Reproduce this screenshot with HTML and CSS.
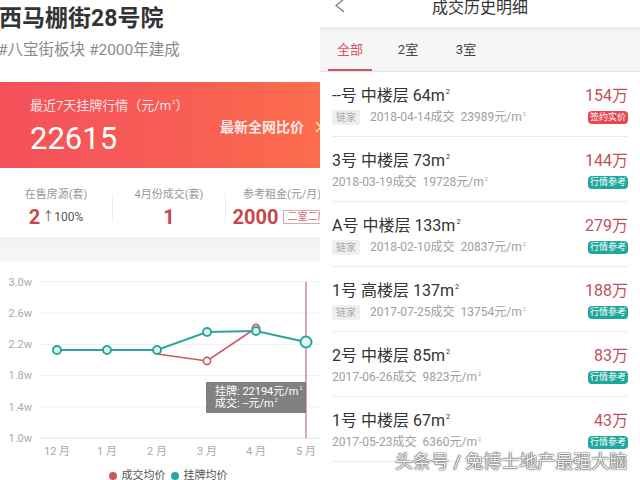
FILE: index.html
```html
<!DOCTYPE html>
<html lang="zh-CN">
<head>
<meta charset="utf-8">
<title>成交历史明细</title>
<link rel="stylesheet" href="styles.css">
</head>
<body>
<div class="page">
  <section class="left">
    <h1 class="title">西马棚街28号院</h1>
    <p class="tags">#八宝街板块 #2000年建成</p>
    <div class="card">
      <div class="card-main">
        <div class="card-label">最近7天挂牌行情（元/m<sup class="sq">2</sup>）</div>
        <div class="card-value">22615</div>
      </div>
      <div class="card-link">最新全网比价<svg class="chev" width="8" height="12" viewBox="0 0 8 12"><polyline points="1,1 6,6 1,11" fill="none" stroke="#fff" stroke-width="1.4"/></svg></div>
    </div>
    <div class="stats">
      <div class="stat">
        <div class="stat-label">在售房源(套)</div>
        <div class="stat-value"><b>2</b><span class="up">↑100%</span></div>
      </div>
      <div class="sep"></div>
      <div class="stat">
        <div class="stat-label">4月份成交(套)</div>
        <div class="stat-value"><b>1</b></div>
      </div>
      <div class="sep"></div>
      <div class="stat">
        <div class="stat-label">参考租金(元/月)</div>
        <div class="stat-value"><b>2000</b><span class="room">二室二厅</span></div>
      </div>
    </div>
    <div class="band"></div>
    <div class="chart">
      <svg class="chart-svg" width="320" height="206" viewBox="0 262 320 206">
        <g stroke="#efefef" stroke-width="1">
          <line x1="40" y1="281.7" x2="320" y2="281.7"/>
          <line x1="40" y1="313" x2="320" y2="313"/>
          <line x1="40" y1="344.3" x2="320" y2="344.3"/>
          <line x1="40" y1="375.6" x2="320" y2="375.6"/>
          <line x1="40" y1="406.9" x2="320" y2="406.9"/>
        </g>
        <line x1="40" y1="438.2" x2="320" y2="438.2" stroke="#e2e2e2" stroke-width="1"/>
        <g class="ylab" text-anchor="end">
          <text x="32" y="285.5">3.0w</text>
          <text x="32" y="316.8">2.6w</text>
          <text x="32" y="348.1">2.2w</text>
          <text x="32" y="379.4">1.8w</text>
          <text x="32" y="410.7">1.4w</text>
          <text x="32" y="442">1.0w</text>
        </g>
        <g class="xlab" text-anchor="middle">
          <text x="57" y="455">12 月</text>
          <text x="107" y="455">1 月</text>
          <text x="157" y="455">2 月</text>
          <text x="207" y="455">3 月</text>
          <text x="256" y="455">4 月</text>
          <text x="306" y="455">5 月</text>
        </g>
        <line x1="306" y1="281.7" x2="306" y2="438.2" stroke="#cf8e95" stroke-width="1.5"/>
        <polyline points="157,354 207,361 256,328" fill="none" stroke="#c9585d" stroke-width="1.6"/>
        <circle cx="207" cy="361" r="3.6" fill="#fff" stroke="#c9585d" stroke-width="1.6"/>
        <circle cx="256" cy="328" r="3.6" fill="#fff" stroke="#c9585d" stroke-width="1.6"/>
        <polyline points="57,350 107,350 157,350 207,332 256,331 306,342" fill="none" stroke="#2ba69e" stroke-width="2"/>
        <g fill="#dcf6f3" stroke="#2ba69e" stroke-width="2">
          <circle cx="57" cy="350" r="4"/>
          <circle cx="107" cy="350" r="4"/>
          <circle cx="157" cy="350" r="4"/>
          <circle cx="207" cy="332" r="4"/>
          <circle cx="256" cy="331" r="4"/>
          <circle cx="306" cy="342" r="5.5"/>
        </g>
      </svg>
      <div class="tooltip">
        <div>挂牌: 22194元/m<sup class="sq">2</sup></div>
        <div>成交: --元/m<sup class="sq">2</sup></div>
      </div>
      <div class="legend">
        <span class="lg"><i class="dot dot-red"></i>成交均价</span>
        <span class="lg"><i class="dot dot-teal"></i>挂牌均价</span>
      </div>
    </div>
  </section>

  <section class="right">
    <header class="rhead">
      <svg class="back" width="12" height="15" viewBox="0 0 12 15"><polyline points="10,0 2,6.5 10,13" fill="none" stroke="#777" stroke-width="1.2"/></svg>
      <h2 class="rtitle">成交历史明细</h2>
      <span></span>
    </header>
    <nav class="tabs">
      <span class="tab active">全部</span>
      <span class="tab">2室</span>
      <span class="tab">3室</span>
    </nav>
    <ul class="list">
      <li class="item">
        <div class="row"><span class="name">--号 中楼层 64m<sup class="sq">2</sup></span><span class="price">154万</span></div>
        <div class="row"><span class="meta"><span class="src">链家</span>2018-04-14成交<span class="unit">23989元/m<sup class="sq">2</sup></span></span><span class="badge badge-red">签约实价</span></div>
      </li>
      <li class="item">
        <div class="row"><span class="name">3号 中楼层 73m<sup class="sq">2</sup></span><span class="price">144万</span></div>
        <div class="row"><span class="meta">2018-03-19成交<span class="unit">19728元/m<sup class="sq">2</sup></span></span><span class="badge">行情参考</span></div>
      </li>
      <li class="item">
        <div class="row"><span class="name">A号 中楼层 133m<sup class="sq">2</sup></span><span class="price">279万</span></div>
        <div class="row"><span class="meta"><span class="src">链家</span>2018-02-10成交<span class="unit">20837元/m<sup class="sq">2</sup></span></span><span class="badge">行情参考</span></div>
      </li>
      <li class="item">
        <div class="row"><span class="name">1号 高楼层 137m<sup class="sq">2</sup></span><span class="price">188万</span></div>
        <div class="row"><span class="meta"><span class="src">链家</span>2017-07-25成交<span class="unit">13754元/m<sup class="sq">2</sup></span></span><span class="badge">行情参考</span></div>
      </li>
      <li class="item">
        <div class="row"><span class="name">2号 中楼层 85m<sup class="sq">2</sup></span><span class="price">83万</span></div>
        <div class="row"><span class="meta">2017-06-26成交<span class="unit">9823元/m<sup class="sq">2</sup></span></span><span class="badge">行情参考</span></div>
      </li>
      <li class="item">
        <div class="row"><span class="name">1号 中楼层 67m<sup class="sq">2</sup></span><span class="price">43万</span></div>
        <div class="row"><span class="meta">2017-05-23成交<span class="unit">6360元/m<sup class="sq">2</sup></span></span><span class="badge">行情参考</span></div>
      </li>
    </ul>
  </section>

  <div class="watermark">头条号 / 兔博士地产最强大脑</div>
</div>
</body>
</html>
```

FILE: styles.css
```css
* { box-sizing: border-box; margin: 0; padding: 0; }
html, body { width: 640px; height: 480px; overflow: hidden; background: #fff; }
body { font-family: Roboto, "Noto Sans CJK SC", sans-serif; color: #333; }

.page { position: relative; display: flex; width: 640px; height: 480px; }
.sq { font-size: 0.45em; line-height: 0; vertical-align: 0.95em; margin-left: 1px; }

/* ---------- left ---------- */
.left { width: 320px; height: 480px; overflow: hidden; display: flex; flex-direction: column; flex: none; }
.title { font-size: 23px; line-height: 28px; font-weight: 700; color: #333; padding-top: 5px; margin-left: -1px; white-space: nowrap; }
.tags { font-size: 15.5px; line-height: 20px; color: #8a8a8a; margin-top: 7px; margin-left: -2px; white-space: nowrap; }

.card { margin-top: 22px; height: 86px; flex: none; padding-top: 16px; background: linear-gradient(90deg, #f4505b 0%, #f75c55 50%, #fb6d4c 100%); display: flex; align-items: flex-start; color: #fff; white-space: nowrap; }
.card-main { width: 220px; flex: none; padding-left: 30px; }
.card-label { font-size: 13px; line-height: 16px; color: rgba(255,255,255,0.85); }
.card-value { font-size: 31px; line-height: 36px; margin-top: 7px; font-weight: 400; }
.card-link { margin-top: 21px; font-size: 14px; line-height: 16px; font-weight: 700; color: rgba(255,255,255,0.88); display: flex; align-items: center; }
.chev { margin-left: 11px; opacity: 0.85; }

.stats { display: flex; align-items: center; padding: 20px 0 10px; flex: none; }
.stat { width: 112px; flex: none; text-align: center; white-space: nowrap; }
.sep { width: 1px; height: 28px; background: #ececec; flex: none; }
.stat-label { font-size: 11px; line-height: 14px; color: #999; }
.stat-value { margin-top: 5px; line-height: 20px; height: 20px; display: flex; justify-content: center; align-items: center; }
.stat-value b { font-size: 20px; font-weight: 700; color: #c8474d; }
.up { font-size: 12px; color: #555; margin-left: 2px; }
.room { font-size: 10px; line-height: 12px; color: #c8687a; border: 1px solid #e4a3ad; padding: 0 3px; margin-left: 5px; }

.band { height: 25px; flex: none; background: linear-gradient(#f1f1f1, #f7f7f7); }

.chart { position: relative; flex: 1; }
.chart-svg { display: block; }
.ylab, .xlab { font-family: Roboto, "Noto Sans CJK SC", sans-serif; font-size: 11px; fill: #aaa; }
.tooltip { position: absolute; left: 206px; top: 120px; width: 100px; height: 31px; background: rgba(112,112,112,0.88); color: #fff; font-size: 11px; line-height: 12px; padding: 4px 9px; white-space: nowrap; }
.legend { display: flex; justify-content: center; gap: 5px; padding-left: 16px; font-size: 11px; line-height: 16px; color: #555; }
.lg { display: flex; align-items: center; }
.dot { display: inline-block; width: 8px; height: 8px; border-radius: 50%; margin-right: 5px; }
.dot-red { background: #c9585d; }
.dot-teal { background: #2ba69e; }

/* ---------- right ---------- */
.right { width: 320px; height: 480px; overflow: hidden; flex: none; }
.rhead { height: 27px; display: grid; grid-template-columns: 1fr auto 1fr; align-items: start; }
.back { display: block; margin-left: 14px; margin-top: -1px; }
.rtitle { font-size: 16px; line-height: 16px; font-weight: 400; color: #333; }

.tabs { height: 45px; display: flex; gap: 14px; padding-left: 8px; background: linear-gradient(#ebebeb, #f6f6f6 6px); border-bottom: 1px solid #e3e3e3; }
.tab { width: 44px; text-align: center; font-size: 13px; line-height: 16px; padding-top: 15px; color: #444; }
.tab.active { color: #d4525e; border-bottom: 2px solid #d4525e; }

.list { list-style: none; }
.item { margin: 0 12px; height: 65px; padding-top: 14px; border-bottom: 1px solid #ebebeb; }
.row { display: flex; justify-content: space-between; align-items: center; }
.row + .row { margin-top: 3px; }
.name { font-size: 16px; line-height: 20px; color: #333; white-space: nowrap; }
.price { font-size: 16px; line-height: 20px; color: #c2505c; }
.meta { font-size: 12px; line-height: 16px; color: #a0a0a0; display: flex; align-items: center; white-space: nowrap; }
.unit { margin-left: 6px; }
.src { font-size: 10px; line-height: 15px; color: #aaa; background: #efefef; padding: 0 4px; border-radius: 2px; margin-right: 10px; }
.badge { font-size: 9px; line-height: 13px; color: #fff; background: #1fa89d; padding: 0 2px; border-radius: 4px; width: 40px; text-align: center; }
.badge-red { background: #e9474f; }

.watermark { position: absolute; left: 395px; top: 451px; font-size: 18px; line-height: 22px; color: rgba(255,255,255,0.95); text-shadow: 0 0 1px #444, 0 0 1px #444, 0 0 2px #777; white-space: nowrap; }
```
